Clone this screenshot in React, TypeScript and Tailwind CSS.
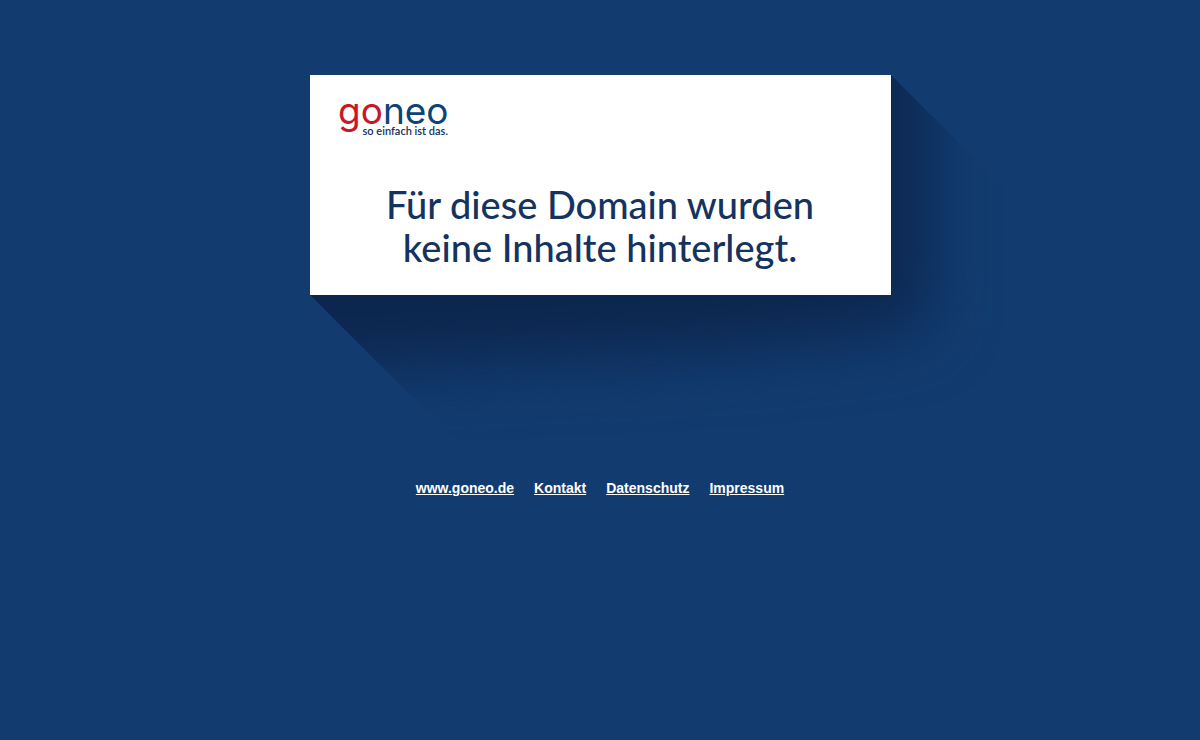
const links = [
  { label: 'www.goneo.de', href: '#goneo' },
  { label: 'Kontakt', href: '#kontakt' },
  { label: 'Datenschutz', href: '#datenschutz' },
  { label: 'Impressum', href: '#impressum' },
]

function Logo() {
  return (
    <svg width="120" height="56" viewBox="0 0 120 56" role="img" aria-label="goneo - so einfach ist das." overflow="visible">
      <text x="-2" y="41" fontSize="37" className="font-['Inter',sans-serif]">
        <tspan fill="#cb1626">go</tspan>
        <tspan fill="#0d4378">neo</tspan>
      </text>
      <text x="108" y="52" fontSize="11" textAnchor="end" fill="#16315e" className="font-['Lato',sans-serif] font-semibold">
        so einfach ist das.
      </text>
    </svg>
  )
}

// long diagonal shadow, falls to the lower right of the card
function Shadow() {
  return (
    <svg className="absolute left-0 top-0 max-w-none" width="720" height="420" viewBox="0 0 720 420" aria-hidden="true">
      <defs>
        <clipPath id="cast">
          <polygon points="0,220 200,420 720,420 720,139 581,0" />
        </clipPath>
        <filter id="soft" filterUnits="userSpaceOnUse" x="-300" y="-300" width="1100" height="900" colorInterpolationFilters="sRGB">
          <feGaussianBlur stdDeviation="33" />
        </filter>
      </defs>
      <g clipPath="url(#cast)">
        <polygon points="-200,-200 616,-200 616,252 420,274 -200,304" fill="#0c264e" filter="url(#soft)" />
      </g>
    </svg>
  )
}

export default function App() {
  return (
    <div className="min-h-screen bg-[#123c70] px-4 pt-[75px] pb-10 overflow-hidden font-['Liberation_Sans',Arial,sans-serif]">
      <main className="relative mx-auto max-w-[581px]">
        <Shadow />
        <section className="relative bg-white px-[30px] pt-2 pb-[26px]">
          <Logo />
          <h1 className="mt-11 text-center text-[38px] leading-[43px] font-medium text-[#15335f] font-['Lato',sans-serif]">
            Für diese Domain wurden
            <br />
            keine Inhalte hinterlegt.
          </h1>
        </section>
      </main>

      {/* Footer links */}
      <nav className="relative mt-[183px] flex flex-wrap justify-center gap-x-5 gap-y-2">
        {links.map((link) => (
          <a key={link.label} href={link.href} className="text-sm font-bold text-white underline">
            {link.label}
          </a>
        ))}
      </nav>
    </div>
  )
}
